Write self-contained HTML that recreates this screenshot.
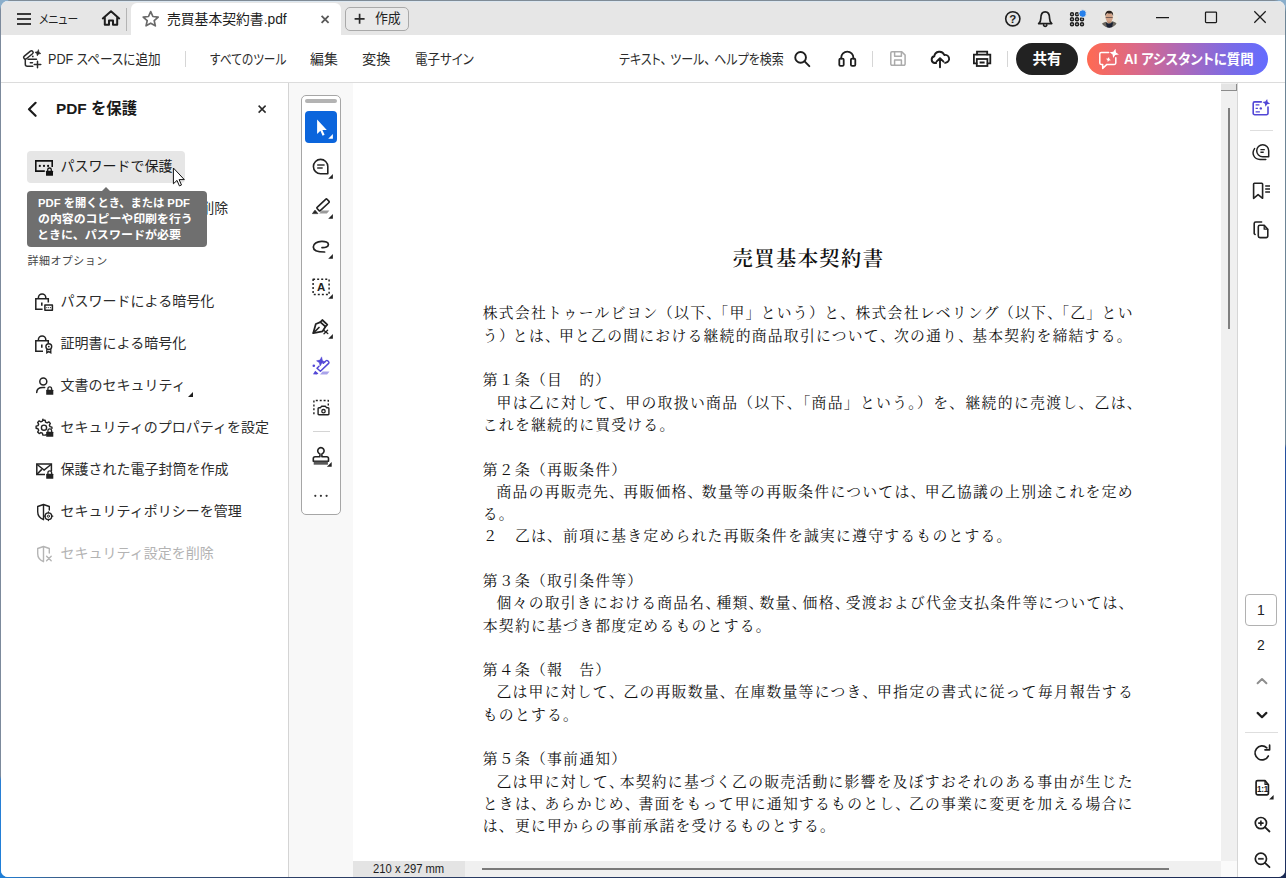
<!DOCTYPE html>
<html lang="ja">
<head>
<meta charset="utf-8">
<title>売買基本契約書.pdf</title>
<style>
*{box-sizing:border-box;margin:0;padding:0}
html,body{width:1286px;height:878px;overflow:hidden}
body{position:relative;background:#8aaecb;font-family:"Liberation Sans","Noto Sans CJK JP",sans-serif;color:#2c2c2c;-webkit-font-smoothing:antialiased}
.abs{position:absolute}
#deskL{left:0;top:0;width:8px;height:878px;background:linear-gradient(#8aaecb 0,#8aaecb 6px,#7c8a9c 10px,#7c8a9c 776px,#2a7fd4 780px,#1e7fd9 100%)}
#deskT{left:0;top:0;width:1286px;height:8px;background:linear-gradient(90deg,#8aaecb 0,#8aaecb 6px,#7f8b96 10px,#7f8b96 1274px,#8aaecb 1280px)}
#deskR{left:1278px;top:0;width:8px;height:878px;background:linear-gradient(#8aaecb 0,#8aaecb 6px,#6d8596 12px,#6d8596 444px,#2450a0 448px,#2450a0 700px,#1d2c58 100%)}
#deskB{left:0;top:870px;width:1286px;height:8px;background:linear-gradient(90deg,#1e7fd9 0,#3a5f8a 60px,#2c3f66 300px,#1b2b55 100%)}
#win{left:1px;top:1px;width:1284px;height:876px;background:#fff;border-radius:7px;overflow:hidden}
/* title bar */
#tb{left:0;top:0;width:1284px;height:34px;background:#e6e6e6;border-top:1px solid #dbe7f1}
.ui{font-family:"Liberation Sans","Noto Sans CJK JP",sans-serif;font-feature-settings:"palt" 1;white-space:nowrap}
#tab{left:130px;top:2px;width:210px;height:33px;background:#fff;border-radius:6px 6px 0 0}
#newbtn{left:344px;top:6px;width:64px;height:24px;border:1px solid #a9a9a9;border-radius:5px;background:#e9e9e9}
/* toolbar */
#bar{left:0;top:34px;width:1284px;height:48px;background:#fff;border-bottom:1px solid #dcdcdc}
.vsep{width:1px;background:#d6d6d6}
.t{transform-origin:0 50%}
.cm{margin-right:.32em}
#share{left:1015px;top:8px;width:62px;height:32px;border-radius:16px;background:#222;color:#fff;font-weight:bold;font-size:14.6px;line-height:32px;text-align:center}
#ai{left:1086px;top:8px;width:181px;height:32px;border-radius:16px;background:linear-gradient(90deg,#ff6a52 0,#d9698a 28%,#a869bd 55%,#7a6be6 80%,#646cff 100%);color:#fff;font-weight:bold;font-size:14px;line-height:32px}
/* left panel */
#lp{left:0;top:82px;width:287px;height:794px;background:#fff}
#lpb{left:287px;top:82px;width:1px;height:794px;background:#d4d4d4}
.item{left:60px;font-size:14px;line-height:20px;white-space:nowrap;font-family:"Liberation Sans","Noto Sans CJK JP",sans-serif;color:#2c2c2c}
/* doc area */
#da{left:288px;top:82px;width:932px;height:794px;background:#f8f8f8}
#page{left:352px;top:82px;width:868px;height:778px;background:#fff}
.doc{font-family:"Liberation Serif","Noto Serif CJK JP","Noto Serif CJK SC",serif;color:#111;white-space:nowrap}
.ln{left:481.8px;width:650.9px;height:22px;font-size:14.8px;letter-spacing:1.26px;line-height:22px;text-align:justify;text-align-last:justify}
.ln.s{text-align-last:left;text-align:left}
.tl{font-size:11.8px;font-weight:bold;color:#fff;line-height:16px;white-space:nowrap;font-family:"Liberation Sans","Noto Sans CJK JP",sans-serif}
/* floating tools */
#ft{left:300px;top:94px;width:40px;height:420px;background:#fff;border:1px solid #a6a6a6;border-radius:5px}
/* scrollbars */
#vs{left:1220px;top:82px;width:17px;height:778px;background:#f0f0f0;border-right:1px solid #d6d6d6}
#hs{left:464px;top:860px;width:756px;height:16px;background:#f0f0f0}
#sz{left:352px;top:860px;width:112px;height:16px;background:#e4e4e4;font-size:12px;line-height:16px;color:#222}
#corner{left:1220px;top:860px;width:16px;height:16px;background:#fafafa}
/* right rail */
#rr{left:1237px;top:82px;width:47px;height:794px;background:#fff}
svg{position:absolute;overflow:visible}
</style>
</head>
<body>
<div id="deskT" class="abs"></div><div id="deskL" class="abs"></div><div id="deskR" class="abs"></div><div id="deskB" class="abs"></div>
<div id="win" class="abs">

<!-- TITLE BAR -->
<div id="tb" class="abs"></div>
<div id="tab" class="abs"></div>
<div id="newbtn" class="abs"></div>

<div class="abs ui t" id="t-menu" style="left:37.66px;top:8.55px;font-size:12.5px;line-height:20px;color:#222;transform:scaleX(0.8615)">メニュー</div>
<div class="abs" style="left:125px;top:7px;width:1px;height:23px;background:#b4b4b4"></div>
<div class="abs ui t" id="t-tab" style="left:166.20px;top:7px;font-size:14px;line-height:22px;color:#1c1c1c;transform:scaleX(0.9860)">売買基本契約書.pdf</div>
<div class="abs ui t" id="t-new" style="left:374.39px;top:8px;font-size:13.6px;line-height:20px;color:#222;transform:scaleX(0.9468)">作成</div>

<!--TB-CONTENT-->

<!-- TOOLBAR -->
<div id="bar" class="abs">

<div class="abs ui t" id="t-add" style="left:47.03px;top:13px;font-size:14px;line-height:22px;color:#2a2a2a;transform:scaleX(0.9017)">PDF スペースに追加</div>
<div class="abs vsep" style="left:184px;top:16px;height:16px"></div>
<div class="abs ui t" id="t-all" style="left:208.98px;top:13px;font-size:14px;line-height:22px;transform:scaleX(0.8342)">すべてのツール</div>
<div class="abs ui t" id="t-edit" style="left:309.30px;top:13px;font-size:14px;line-height:22px;transform:scaleX(0.9932)">編集</div>
<div class="abs ui t" id="t-conv" style="left:361.31px;top:13px;font-size:14px;line-height:22px;transform:scaleX(1.0150)">変換</div>
<div class="abs ui t" id="t-sign" style="left:413.76px;top:13px;font-size:14px;line-height:22px;transform:scaleX(0.8910)">電子サイン</div>
<div class="abs ui t" id="t-search" style="left:618.35px;top:13px;font-size:14px;line-height:22px;transform:scaleX(0.8563)">テキスト<span class="cm">、</span>ツール<span class="cm">、</span>ヘルプを検索</div>
<div class="abs vsep" style="left:871px;top:16px;height:16px"></div>
<div class="abs vsep" style="left:1006px;top:16px;height:16px"></div>
<div id="share" class="abs ui">共有</div>
<div id="ai" class="abs ui"><span class="abs t" id="t-ai" style="left:37.1px;top:0;transform:scaleX(0.957)">AI アシスタントに質問</span></div>
<!--BAR-CONTENT-->
</div>


<svg class="abs" style="left:0;top:0" width="1284" height="82" viewBox="1 1 1284 82" fill="none" stroke-linecap="round" stroke-linejoin="round">
<g stroke="#fff" stroke-width="1.500">
<path d="M1108.600 52.600 h-7.400 a1.400 1.400 0 0 0 -1.400 1.400 v9 a1.400 1.400 0 0 0 1.400 1.400 h1.500 v4 l4.200 -4 h7.500 a1.400 1.400 0 0 0 1.400 -1.400 v-5.200"/>
</g>
<path d="M1114.300 48.600 l1.400 3.400 3.400 1.400 -3.400 1.400 -1.400 3.400 -1.400 -3.400 -3.400 -1.400 3.400 -1.400z" fill="#fff" transform="rotate(14 1114.300 53.400)"/>
<path d="M1108.400 56.900 l.8 1.800 1.800 .8 -1.800 .8 -.8 1.800 -.8 -1.800 -1.800 -.8 1.800 -.8z" fill="#fff" transform="rotate(14 1108.400 59.500)"/>
</svg>

<svg class="abs" id="ic1" style="left:0;top:0" width="1284" height="82" viewBox="1 1 1284 82" fill="none" stroke-linecap="round" stroke-linejoin="round">
<!-- hamburger -->
<g stroke="#3a3a3a" stroke-width="2" stroke-linecap="butt"><path d="M17 14h14M17 19h14M17 24h14"/></g>
<!-- home -->
<path d="M102.8 18.4 L111 11.3 L119.2 18.4 M104.8 17.2 V24.8 H109 V20.6 H113 V24.8 H117.2 V17.2" stroke="#1e1e1e" stroke-width="2"/>
<!-- star -->
<path d="M150.7 11.6 l2.2 4.9 5.3 .55 -4 3.6 1.15 5.2 -4.65 -2.7 -4.65 2.7 1.15 -5.2 -4 -3.6 5.3 -.55z" stroke="#6a6a6a" stroke-width="1.7"/>
<!-- tab close -->
<path d="M321.6 15.8 l7 7 M328.6 15.8 l-7 7" stroke="#5a5a5a" stroke-width="1.8" stroke-linecap="butt"/>
<!-- plus -->
<path d="M354.6 18.8 h10 M359.6 13.8 v10" stroke="#2a2a2a" stroke-width="1.7" stroke-linecap="butt"/>
<!-- help -->
<circle cx="1012.8" cy="18.8" r="7.1" stroke="#1e1e1e" stroke-width="1.6"/>
<text x="1012.8" y="23" text-anchor="middle" font-family="Liberation Sans, sans-serif" font-weight="bold" font-size="11.5" fill="#1e1e1e" stroke="none">?</text>
<!-- bell -->
<path d="M1038.6 23.6 c1.6 -1.2 2.2 -2.6 2.2 -5.2 c0 -4 1.6 -6.6 4.4 -6.6 s4.4 2.6 4.4 6.6 c0 2.6 .6 4 2.2 5.2 z M1043.6 25.2 a1.7 1.7 0 0 0 3.2 0" stroke="#1e1e1e" stroke-width="1.7"/>
<!-- app grid -->
<g stroke="#1e1e1e" stroke-width="1.5">
<circle cx="1072" cy="14.2" r="1.45"/><circle cx="1077" cy="14.2" r="1.45"/>
<circle cx="1072" cy="19.2" r="1.5"/><circle cx="1077" cy="19.2" r="1.5"/><circle cx="1082" cy="19.2" r="1.5"/>
<circle cx="1072" cy="24.2" r="1.5"/><circle cx="1077" cy="24.2" r="1.5"/><circle cx="1082" cy="24.2" r="1.5"/>
</g>
<circle cx="1082.6" cy="13.6" r="3.75" fill="#2680eb" stroke="#e6e6e6" stroke-width="1"/>
<!-- avatar -->
<defs><clipPath id="avc"><circle cx="1109.200" cy="18.900" r="8.800"/></clipPath></defs>
<g clip-path="url(#avc)" stroke="none">
<rect x="1100" y="9.500" width="18.500" height="19" fill="#ebe8e1"/>
<path d="M1100 28.500 v-3 c1.800 -2.300 4 -3.300 6 -3.700 l3 1.700 3.200 -2.200 c2.600 .6 4.600 1.800 6.300 4 v3.200z" fill="#6a665e"/>
<path d="M1105.800 22.600 l1.400 6 h4.600 l1.400 -6.600 -2.600 1.600 -2.400 .2z" fill="#1c2233"/>
<ellipse cx="1109.200" cy="17.300" rx="3.700" ry="4.700" fill="#d3a488"/>
<path d="M1105.200 16.400 c-.5 -3.900 1.400 -5.700 4 -5.700 s4.300 1.700 3.900 5.400 c-.5 -1.700 -1.200 -2.500 -1.900 -2.900 c-1.400 .5 -2.800 .2 -3.800 -.3 c-1.100 .8 -1.800 1.800 -2.200 3.500z" fill="#2b211c"/>
<path d="M1105.800 16.900 h6.800 v1.100 h-6.800z" fill="#5b4a45" opacity=".8"/>
<path d="M1106.600 20.200 c1 1.700 4.200 1.700 5.200 0 c-.2 2.100 -1.400 2.900 -2.600 2.900 s-2.400 -.8 -2.600 -2.900z" fill="#b98468"/>
</g>
<!-- window controls -->
<g stroke="#1a1a1a" stroke-width="1.25" stroke-linecap="butt">
<path d="M1156 17.500 h13"/>
<rect x="1205.500" y="12" width="11" height="10.500" rx=".8"/>
<path d="M1254.300 11.300 l11.400 11.400 M1265.700 11.300 l-11.400 11.400"/>
</g>
<!-- add to pdf space icon -->
<g stroke="#2a2a2a" stroke-width="1.5">
<path d="M25.300 59.300 v5 a2 2 0 0 0 2 2 h5.500"/>
<path d="M28 59.300 h8.500"/>
<path d="M30.300 62.800 h2.200"/>
<rect x="22.800" y="53.300" width="11.200" height="3.300" rx="1.650" transform="rotate(-39 28.400 54.950)"/>
<path d="M34.200 64.500 h6.600 M37.500 61.200 v6.600"/>
</g>
<circle cx="32.800" cy="56.400" r=".9" fill="#2a2a2a"/>
<path d="M37.900 49.900 l.9 2.100 2.100 .9 -2.100 .9 -.9 2.100 -.9 -2.100 -2.100 -.9 2.100 -.9z" fill="#2a2a2a" stroke="#2a2a2a" stroke-width=".6" transform="rotate(12 37.900 52.900)"/>
<!-- search -->
<circle cx="800.600" cy="57.400" r="5.350" stroke="#1e1e1e" stroke-width="1.9"/>
<path d="M804.600 61.400 l4.700 4.700" stroke="#1e1e1e" stroke-width="2"/>
<!-- headphones -->
<g stroke="#1e1e1e" stroke-width="1.800">
<path d="M841.200 58.500 v-.7 a6.100 6.100 0 0 1 12.200 0 v.7"/>
<rect x="839.300" y="58.600" width="4.400" height="7.300" rx="1.200"/>
<rect x="850.900" y="58.600" width="4.400" height="7.300" rx="1.200"/>
</g>
<!-- save (disabled) -->
<g stroke="#ababab" stroke-width="1.500">
<path d="M892 51.800 h9.800 l3.300 3.300 v9 a1.200 1.200 0 0 1 -1.200 1.200 h-11.900 a1.200 1.200 0 0 1 -1.200 -1.200 v-11.100 a1.200 1.200 0 0 1 1.200 -1.200z"/>
<path d="M894.600 52 v4.200 h6.800 v-4.200"/>
<path d="M894.600 65 v-5 h6.800 v5"/>
</g>
<!-- cloud upload -->
<g stroke="#1e1e1e" stroke-width="1.900">
<path d="M936.200 63 h-1.400 a3.400 3.400 0 0 1 -.5 -6.700 a5.200 5.200 0 0 1 10 -1.300 a3.900 3.900 0 0 1 1.800 7.600 l-1 .3"/>
<path d="M940 67.300 v-8.800 M936.500 61.700 l3.500 -3.500 3.500 3.500"/>
</g>
<!-- print -->
<g stroke="#1e1e1e" stroke-width="1.800" stroke-linejoin="miter">
<path d="M976.600 63.300 h-2.700 v-8.700 h16.400 v8.700 h-2.700"/>
<path d="M977 54.400 v-2.700 h10.200 v2.700"/>
<rect x="976.800" y="59" width="10.600" height="7"/>
<path d="M979.600 62.500 h5" stroke-linecap="butt"/>
</g>
</svg>

<!-- LEFT PANEL -->
<div id="lp" class="abs"></div><div id="lpb" class="abs"></div>
<div class="abs" style="left:26px;top:150px;width:158px;height:32px;background:#e6e6e6;border-radius:4px"></div>
<div class="abs t" id="p-title" style="left:55.32px;top:97px;font-size:15.5px;font-weight:bold;line-height:22px;color:#1a1a1a;white-space:nowrap;transform:scaleX(0.9902)">PDF を保護</div>
<div class="abs t" id="p-adv" style="left:26.5px;top:251px;font-size:11px;letter-spacing:.45px;line-height:18px;color:#464646;white-space:nowrap">詳細オプション</div>
<div class="abs item t" id="p-1" style="left:59.6px;top:155.0px;color:#1c1c1c">パスワードで保護</div>
<div class="abs item t" id="p-2" style="left:59.6px;top:197.0px;color:#2c2c2c">非表示情報を検索して削除</div>
<div class="abs item t" id="p-3" style="left:59.6px;top:290.4px;color:#2c2c2c">パスワードによる暗号化</div>
<div class="abs item t" id="p-4" style="left:59.6px;top:332.4px;color:#2c2c2c">証明書による暗号化</div>
<div class="abs item t" id="p-5" style="left:59.6px;top:374.4px;color:#2c2c2c">文書のセキュリティ</div>
<div class="abs item t" id="p-6" style="left:59.6px;top:416.4px;color:#2c2c2c">セキュリティのプロパティを設定</div>
<div class="abs item t" id="p-7" style="left:59.6px;top:458.4px;color:#2c2c2c">保護された電子封筒を作成</div>
<div class="abs item t" id="p-8" style="left:59.6px;top:500.4px;color:#2c2c2c">セキュリティポリシーを管理</div>
<div class="abs item t" id="p-9" style="left:59.6px;top:542.4px;color:#b3b3b3">セキュリティ設定を削除</div>

<svg class="abs" id="ic2" style="left:0;top:82px" width="288" height="500" viewBox="1 83 288 500" fill="none" stroke-linecap="round" stroke-linejoin="round">
<!-- back chevron -->
<path d="M35.600 102.800 l-6.600 6.500 6.600 6.500" stroke="#1c1c1c" stroke-width="2.200"/>
<!-- close -->
<path d="M258.600 105.600 l7 7 M265.600 105.600 l-7 7" stroke="#2a2a2a" stroke-width="1.500" stroke-linecap="butt"/>
<!-- item1: password box + lock -->
<g stroke="#111" stroke-width="1.600" stroke-linejoin="miter" stroke-linecap="butt">
<path d="M44.800 171.100 h-9 v-10.200 h16.400 v6.200"/>
</g>
<g fill="#111"><circle cx="39.800" cy="165.900" r="1.100"/><circle cx="44" cy="165.900" r="1.100"/><circle cx="48.100" cy="165.900" r="1.100"/>
<rect x="46" y="170.700" width="7" height="5" rx=".5"/></g>
<path d="M47.700 170.700 v-.9 a1.800 1.800 0 0 1 3.600 0 v.9" stroke="#111" stroke-width="1.300"/>
<!-- item3: lock + password badge -->
<g id="lockbase" stroke="#222" stroke-width="1.500" stroke-linejoin="miter" stroke-linecap="butt">
<path d="M42.600 309.200 h-6.800 v-10.400 h12.500 v3.600"/>
<path d="M38.400 298.600 v-.9 a3.700 3.700 0 0 1 7.400 0 v.9"/>
<path d="M41.800 302.400 v3.400" stroke-width="1.600"/>
</g>
<rect x="44.900" y="305" width="7.500" height="5.200" stroke="#222" stroke-width="1.500" fill="#fff"/>
<g fill="#222"><circle cx="46.800" cy="307.600" r=".55"/><circle cx="48.650" cy="307.600" r=".55"/><circle cx="50.500" cy="307.600" r=".55"/></g>
<!-- item4: lock + certificate -->
<g stroke="#222" stroke-width="1.500" stroke-linejoin="miter" stroke-linecap="butt" transform="translate(0 42)">
<path d="M43 309.200 h-7.200 v-10.400 h12.500 v2.400"/>
<path d="M38.400 298.600 v-.9 a3.700 3.700 0 0 1 7.400 0 v.9"/>
<path d="M41.800 302.400 v3.400" stroke-width="1.600"/>
</g>
<circle cx="48.800" cy="346.600" r="2.900" stroke="#222" stroke-width="1.400" fill="#fff"/>
<circle cx="48.800" cy="346.600" r=".9" fill="#222"/>
<path d="M46.800 349.600 v3.300 l2 -1.300 2 1.300 v-3.300" stroke="#222" stroke-width="1.300" stroke-linejoin="miter"/>
<!-- item5: person + lock -->
<circle cx="43.300" cy="381.500" r="3.500" stroke="#222" stroke-width="1.500"/>
<path d="M36.700 392.600 c0 -3.400 2.600 -5 6.200 -5 h1.800" stroke="#222" stroke-width="1.500"/>
<rect x="46.200" y="389.700" width="7.100" height="5" rx=".5" fill="#222"/>
<path d="M47.900 389.700 v-.9 a1.850 1.850 0 0 1 3.700 0 v.9" stroke="#222" stroke-width="1.300"/>
<!-- item6: gear + lock -->
<g stroke="#222" stroke-width="1.400">
<circle cx="44" cy="427.700" r="2.600"/>
<path d="M42.900 420.300 h2.200 l.5 1.900 1.500 .65 1.700 -1 1.550 1.550 -1 1.700 .65 1.500 1.900 .5 v1.300 M46.300 434.500 l-.7 .6 h-2.700 l-.5 -1.900 -1.500 -.65 -1.700 1 -1.550 -1.550 1 -1.700 -.65 -1.500 -1.900 -.5 v-2.200 l1.900 -.5 .65 -1.500 -1 -1.700 1.550 -1.550 1.700 1 1.500 -.65 .5 -1.900"/>
</g>
<rect x="46.200" y="431.700" width="7.100" height="5" rx=".5" fill="#222"/>
<path d="M47.900 431.700 v-.9 a1.850 1.850 0 0 1 3.700 0 v.9" stroke="#222" stroke-width="1.300"/>
<!-- item7: envelope + lock -->
<g stroke="#222" stroke-width="1.500" stroke-linejoin="miter" stroke-linecap="butt">
<path d="M45 474.500 h-8.200 v-10.400 h14.600 v7"/>
<path d="M37.200 464.500 l6.900 5.600 6.900 -5.600"/>
<path d="M37.200 474 l4.600 -4.600"/>
</g>
<rect x="46.200" y="473.700" width="7.100" height="5" rx=".5" fill="#222"/>
<path d="M47.900 473.700 v-.9 a1.850 1.850 0 0 1 3.700 0 v.9" stroke="#222" stroke-width="1.300"/>
<!-- item8: shield + gear -->
<path d="M43.500 504.500 l5.800 2 v3.500 M43.500 504.500 l-5.800 2 v5.200 c0 4 2.600 6.600 5.800 8 M43.500 504.800 v14.600" stroke="#222" stroke-width="1.400"/>
<circle cx="48.400" cy="516.200" r="3.300" stroke="#222" stroke-width="1.400" fill="#fff"/>
<circle cx="48.400" cy="516.200" r="1.100" stroke="#222" stroke-width="1"/>
<g stroke="#222" stroke-width="1.200"><path d="M48.400 511.800 v1 M48.400 519.600 v1 M44 516.200 h1 M51.800 516.200 h1"/></g>
<!-- item9: shield + x (disabled) -->
<path d="M43.500 546.500 l5.800 2 v4.500 M43.500 546.500 l-5.800 2 v5.200 c0 4 2.600 6.600 5.800 8 M43.500 546.800 v14.600" stroke="#b5b5b5" stroke-width="1.400"/>
<path d="M46.600 556.200 l4.600 4.600 M51.200 556.200 l-4.600 4.600" stroke="#b5b5b5" stroke-width="1.400"/>
<!-- dropdown triangle -->
<path d="M193 391.900 v5 h-5z" fill="#1e1e1e"/>
</svg>
<!--LP-CONTENT-->

<!-- DOC AREA -->
<div id="da" class="abs"></div>
<div id="page" class="abs"></div>
<div class="abs doc" id="dtitle" style="left:632px;top:241.5px;width:351px;text-align:center;font-size:20.3px;letter-spacing:1.45px;font-weight:600;line-height:32px">売買基本契約書</div>
<!--DOC-START-->
<div class="abs doc ln" style="top:300.80px">株式会社トゥールビヨン<span style="margin-left:-0.84px">（</span>以下<span style="letter-spacing:0.42px">、</span><span style="margin-left:-0.84px">「</span>甲<span style="letter-spacing:0.42px">」</span>という<span style="letter-spacing:0.42px">）</span>と<span style="letter-spacing:0.42px">、</span>株式会社レベリング<span style="margin-left:-0.84px">（</span>以下<span style="letter-spacing:0.42px">、</span><span style="margin-left:-0.84px">「</span>乙<span style="letter-spacing:0.42px">」</span>とい</div>
<div class="abs doc ln" style="top:323.79px;width:647.9px">う<span style="letter-spacing:-0.84px">）</span>とは<span style="letter-spacing:-0.84px">、</span>甲と乙の間における継続的商品取引について<span style="letter-spacing:-0.84px">、</span>次の通り<span style="letter-spacing:-0.84px">、</span>基本契約を締結する<span style="letter-spacing:-0.84px">。</span></div>
<div class="abs doc ln s" style="top:368.37px">第１条（目　的）</div>
<div class="abs doc ln" style="top:390.66px;width:660.1px"><span style="letter-spacing:-1.1px">　</span>甲は乙に対して、甲の取扱い商品（以下、「商品」という。）を、継続的に売渡し、乙は、</div>
<div class="abs doc ln s" style="top:412.95px">これを継続的に買受ける。</div>
<div class="abs doc ln s" style="top:457.53px">第２条（再販条件）</div>
<div class="abs doc ln" style="top:479.82px"><span style="letter-spacing:-1.1px">　</span>商品の再販売先<span style="letter-spacing:-0.55px">、</span>再販価格<span style="letter-spacing:-0.55px">、</span>数量等の再販条件については<span style="letter-spacing:-0.55px">、</span>甲乙協議の上別途これを定め</div>
<div class="abs doc ln s" style="top:502.11px">る。</div>
<div class="abs doc ln s" style="top:524.40px">２　乙は、前項に基き定められた再販条件を誠実に遵守するものとする。</div>
<div class="abs doc ln s" style="top:568.98px">第３条（取引条件等）</div>
<div class="abs doc ln" style="top:591.27px;width:646.7px"><span style="letter-spacing:-1.1px">　</span>個々の取引きにおける商品名<span style="letter-spacing:-3.88px">、</span>種類<span style="letter-spacing:-3.88px">、</span>数量<span style="letter-spacing:-3.88px">、</span>価格<span style="letter-spacing:-3.88px">、</span>受渡および代金支払条件等については<span style="letter-spacing:-3.88px">、</span></div>
<div class="abs doc ln s" style="top:613.56px">本契約に基づき都度定めるものとする。</div>
<div class="abs doc ln s" style="top:658.14px">第４条（報　告）</div>
<div class="abs doc ln" style="top:680.43px"><span style="letter-spacing:-1.1px">　</span>乙は甲に対して<span style="letter-spacing:-0.26px">、</span>乙の再販数量<span style="letter-spacing:-0.26px">、</span>在庫数量等につき<span style="letter-spacing:-0.26px">、</span>甲指定の書式に従って毎月報告する</div>
<div class="abs doc ln s" style="top:702.72px">ものとする。</div>
<div class="abs doc ln s" style="top:747.30px">第５条（事前通知）</div>
<div class="abs doc ln" style="top:769.59px"><span style="letter-spacing:-1.1px">　</span>乙は甲に対して<span style="letter-spacing:-4.17px">、</span>本契約に基づく乙の販売活動に影響を及ぼすおそれのある事由が生じた</div>
<div class="abs doc ln" style="top:791.88px">ときは<span style="letter-spacing:-1.24px">、</span>あらかじめ<span style="letter-spacing:-1.24px">、</span>書面をもって甲に通知するものとし<span style="letter-spacing:-1.24px">、</span>乙の事業に変更を加える場合に</div>
<div class="abs doc ln s" style="top:814.17px">は、更に甲からの事前承諾を受けるものとする。</div>
<!--DOC-END-->
<!--DOC-CONTENT-->

<!-- FLOAT TOOLS -->
<div id="ft" class="abs"></div>

<div class="abs" style="left:304px;top:98px;width:32px;height:4px;border-radius:2px;background:#b3b3b3"></div>
<div class="abs" style="left:304px;top:110px;width:32px;height:32px;border-radius:4px;background:#0b65dc"></div>
<div class="abs" style="left:312px;top:430px;width:17px;height:1px;background:#d4d4d4"></div>
<svg class="abs" id="ic3" style="left:299px;top:94px" width="44" height="422" viewBox="300 95 44 422" fill="none" stroke-linecap="round" stroke-linejoin="round">
<!-- select arrow -->
<path d="M317.100 119.600 v14.400 l3.300 -3.200 2.200 4.900 2 -.9 -2.200 -4.800 h4.400z" fill="#fff"/>
<path d="M332.900 134 v4.700 h-4.700z" fill="#fff"/>
<!-- comment -->
<path d="M320.600 159.400 a7.200 7.200 0 0 0 0 14.400 h7.200 v-7.200 a7.200 7.200 0 0 0 -7.200 -7.200z" stroke="#222" stroke-width="1.600"/>
<path d="M317.200 164.900 h7.400 M317.200 167.900 h5.500" stroke="#333" stroke-width="1.500" stroke-linecap="butt"/>
<path d="M332.900 174 v4.700 h-4.700z" fill="#222"/>
<!-- highlighter -->
<rect x="316.300" y="202.700" width="13.600" height="4.600" rx=".8" transform="rotate(-43 323 205)" stroke="#222" stroke-width="1.600"/>
<path d="M312.700 213.300 l2.300 -3.100 2.600 3.100z" fill="#222" stroke="#222" stroke-width=".8"/>
<path d="M319.100 213.600 l2.900 -3.100 h7.400 l-2.500 3.100z" fill="#9a9a9a"/>
<path d="M332.900 214 v4.700 h-4.700z" fill="#222"/>
<!-- draw loop -->
<path d="M322 247.600 c3.400 .2 6.400 -1 6.400 -3.200 c0 -2 -3 -3.200 -6.800 -3.100 c-4.600 .1 -8.300 2.400 -8.300 5.600 c0 3 3.800 5.100 11.300 5.100" stroke="#222" stroke-width="1.700"/>
<path d="M332.900 254 v4.700 h-4.700z" fill="#222"/>
<!-- text box -->
<rect x="313.100" y="279.300" width="16" height="15.200" stroke="#222" stroke-width="1.500" stroke-dasharray="2 2.050" stroke-linecap="butt"/>
<text x="321.200" y="291" text-anchor="middle" font-family="Liberation Sans, sans-serif" font-weight="bold" font-size="11.500" fill="#222">A</text>
<path d="M332.900 294 v4.700 h-4.700z" fill="#222"/>
<!-- fountain pen -->
<g stroke="#222" stroke-width="1.750">
<path d="M322.300 320 l5 4.600 -1.900 2.100 -5 -4.600z"/>
<path d="M320.400 322.100 l-4.600 1.900 -2.600 9.200 9.400 -1.900 2.800 -4.600"/>
<path d="M313.400 333 l5.600 -5.500"/>
<path d="M324 330.400 l3.800 3.200 M327.600 330.200 l-3.600 3.600" stroke-width="1.300"/>
</g>
<path d="M332.900 334 v4.700 h-4.700z" fill="#222"/>
<!-- ai edit (purple) -->
<g stroke="#5247d6" stroke-width="1.500">
<path d="M323.400 363.200 l2.600 -2.400 a1.200 1.200 0 0 1 1.700 0 l.9 .9 a1.200 1.200 0 0 1 0 1.700 l-8.200 7.800 -3.400 -3 2 -1.900"/>
</g>
<path d="M313 374.300 l2.200 -3.600 3.200 2.900 -1.600 .9z" fill="#5247d6"/>
<path d="M320.900 357.200 l1.300 3.100 3.100 1.300 -3.100 1.300 -1.300 3.100 -1.300 -3.100 -3.100 -1.300 3.100 -1.300z" fill="#5247d6" stroke="#5247d6" stroke-width=".5" transform="rotate(10 320.900 361.600)"/>
<circle cx="313.800" cy="365.800" r="1.300" fill="#5247d6"/>
<path d="M320 374.400 l2.600 -2.900 h6.900 l-2.400 2.900z" fill="#a9a3ea"/>
<!-- snapshot -->
<path d="M313.900 414.200 v-13.700 h14.400 v5" stroke="#222" stroke-width="1.400" stroke-dasharray="2 1.900" stroke-linecap="butt"/>
<path d="M318.900 407.700 h1.600 l1 -1.400 h4 l1 1.400 h1.600 a.8 .8 0 0 1 .8 .8 v5.400 a.8 .8 0 0 1 -.8 .8 h-9.200 a.8 .8 0 0 1 -.8 -.8 v-5.400 a.8 .8 0 0 1 .8 -.8z" stroke="#222" stroke-width="1.400" fill="#fff"/>
<circle cx="323.500" cy="411.200" r="1.700" stroke="#222" stroke-width="1.300"/>
<!-- stamp -->
<g stroke="#222" stroke-width="1.600">
<path d="M319.900 453.900 a3.200 3.200 0 1 1 2 0 v2.800 h4.800 a1.800 1.800 0 0 1 1.800 1.800 v2.700 h-15.200 v-2.700 a1.800 1.800 0 0 1 1.800 -1.800 h4.800z"/>
</g>
<rect x="313.700" y="461.600" width="14.200" height="3.100" fill="#585858"/>
<path d="M331.700 461.900 v4.800 h-4.800z" fill="#222"/>
<!-- more -->
<g fill="#333"><circle cx="315.300" cy="495.800" r="1.100"/><circle cx="320.900" cy="495.800" r="1.100"/><circle cx="326.600" cy="495.800" r="1.100"/></g>
</svg>
<!--FT-CONTENT-->

<!-- SCROLLBARS -->
<div id="vs" class="abs"></div><div id="hs" class="abs"></div><div id="sz" class="abs"></div><div id="corner" class="abs"></div>

<div class="abs" style="left:1220px;top:83px;width:16px;height:7px;background:#e4e4e4;border-right:1px solid #8c8c8c;border-bottom:1px solid #8c8c8c;box-sizing:content-box;width:15px;height:6px"></div>
<div class="abs" style="left:1227px;top:107px;width:2px;height:221px;background:#808080"></div>
<div class="abs" style="left:481px;top:867px;width:687px;height:2px;background:#7a7a7a"></div>
<div class="abs" id="t-size" style="left:372.30px;top:860px;font-size:12px;line-height:16px;color:#1e1e1e;white-space:nowrap;font-family:'Liberation Sans',sans-serif;transform-origin:0 50%;transform:scaleX(0.9369)">210 x 297 mm</div>
<div class="abs" style="left:1236px;top:860px;width:1px;height:16px;background:#d6d6d6"></div>
<!--SB-CONTENT-->

<!-- RIGHT RAIL -->
<div id="rr" class="abs"></div>

<div class="abs" style="left:1249px;top:129px;width:23px;height:1px;background:#dedede"></div>
<div class="abs" style="left:1244px;top:731px;width:33px;height:1px;background:#dedede"></div>
<div class="abs" style="left:1244px;top:593px;width:32px;height:32px;border:1px solid #b1b1b1;border-radius:4px;background:#fff"></div>
<div class="abs" id="t-p1" style="left:1244px;top:598.6px;width:32px;text-align:center;font-size:14px;line-height:20px;color:#222;font-family:'Liberation Sans',sans-serif">1</div>
<div class="abs" id="t-p2" style="left:1244px;top:633.7px;width:32px;text-align:center;font-size:14px;line-height:20px;color:#222;font-family:'Liberation Sans',sans-serif">2</div>
<svg class="abs" id="ic4" style="left:1237px;top:82px" width="47" height="794" viewBox="1238 83 47 794" fill="none" stroke-linecap="round" stroke-linejoin="round">
<!-- AI panel -->
<g stroke="#5247d6" stroke-width="1.600">
<path d="M1261.300 101.900 h-6.600 a1.500 1.500 0 0 0 -1.500 1.500 v9.800 a1.500 1.500 0 0 0 1.500 1.500 h11.800 a1.500 1.500 0 0 0 1.500 -1.500 v-6.200"/>
<path d="M1255.600 104.900 h3.800 M1255.600 108.400 h2.300 M1255.600 111.900 h4.300" stroke-width="1.400" stroke-linecap="butt"/>
</g>
<circle cx="1260.800" cy="108.400" r="1.200" fill="#5247d6"/>
<path d="M1266.300 98.800 l1.200 2.800 2.800 1.200 -2.800 1.200 -1.200 2.800 -1.200 -2.800 -2.800 -1.200 2.800 -1.200z" fill="#5247d6" transform="rotate(12 1266.300 102.800)"/>
<!-- comments -->
<g stroke="#222" stroke-width="1.500">
<path d="M1262.700 144.800 a6 6 0 0 0 0 12 h6 v-6 a6 6 0 0 0 -6 -6z"/>
<path d="M1260.400 149.600 h4.400 M1260.400 152.300 h3.300" stroke-width="1.400" stroke-linecap="butt"/>
<path d="M1254.600 148.600 c-3.400 4.600 -.6 10.800 5.400 10.800 h5.800"/>
</g>
<!-- bookmark -->
<g stroke="#222" stroke-width="1.600">
<path d="M1253.600 198.300 v-14.200 a.8 .8 0 0 1 .8 -.8 h7.400 a.8 .8 0 0 1 .8 .8 v14.200 l-4.500 -3.700z"/>
<path d="M1265.200 185.900 h4.800 M1265.200 188.900 h4.800 M1265.200 191.900 h4.800" stroke-width="1.500" stroke-linecap="butt"/>
</g>
<!-- pages -->
<g stroke="#222" stroke-width="1.600">
<path d="M1261.600 222 h-5.800 a1.600 1.600 0 0 0 -1.600 1.600 v10 l.9 .9"/>
<path d="M1264.200 225.200 h-4.300 a1.600 1.600 0 0 0 -1.600 1.600 v9.200 a1.600 1.600 0 0 0 1.600 1.600 h6.300 a1.600 1.600 0 0 0 1.600 -1.600 v-6.800z"/>
<path d="M1264.200 225.600 v3.600 h3.400" stroke-width="1.300"/>
</g>
<!-- chevrons -->
<path d="M1257.600 683.300 l4.400 -4.300 4.400 4.300" stroke="#8e8e8e" stroke-width="2"/>
<path d="M1257.600 712.900 l4.400 4.300 4.400 -4.300" stroke="#1e1e1e" stroke-width="2.200"/>
<!-- rotate -->
<path d="M1268.300 756 a7 7 0 1 1 -1.500 -8.200" stroke="#1e1e1e" stroke-width="1.700"/>
<path d="M1269.600 745.200 v4.600 h-4.600" stroke="#1e1e1e" stroke-width="1.700"/>
<!-- 1:1 -->
<path d="M1265 780.600 h-7.400 a1.500 1.500 0 0 0 -1.500 1.500 v11.200 a1.500 1.500 0 0 0 1.500 1.500 h9.300 a1.500 1.500 0 0 0 1.500 -1.500 v-8.600z" stroke="#1e1e1e" stroke-width="1.700"/>
<path d="M1265 781 v3.400 h3.200" stroke="#1e1e1e" stroke-width="1.200"/>
<text x="1262.500" y="792.200" text-anchor="middle" font-family="Liberation Sans, sans-serif" font-weight="bold" font-size="8.200" fill="#1e1e1e" letter-spacing="-.3">1:1</text>
<path d="M1273.600 795 v4.500 h-4.500z" fill="#1e1e1e"/>
<!-- zoom in -->
<circle cx="1260.900" cy="823.100" r="5.600" stroke="#1e1e1e" stroke-width="1.700"/>
<path d="M1265 827.200 l4.500 4.300" stroke="#1e1e1e" stroke-width="1.800"/>
<path d="M1258.200 823.100 h5.400 M1260.900 820.400 v5.400" stroke="#1e1e1e" stroke-width="1.600" stroke-linecap="butt"/>
<!-- zoom out -->
<circle cx="1260.900" cy="858.800" r="5.600" stroke="#1e1e1e" stroke-width="1.700"/>
<path d="M1265 862.900 l4.500 4.300" stroke="#1e1e1e" stroke-width="1.800"/>
<path d="M1258.100 858.800 h5.600" stroke="#333" stroke-width="1.800" stroke-linecap="butt"/>
</svg>
<!--RR-CONTENT-->

<!-- TOOLTIP + CURSOR -->

<div class="abs" id="tip" style="left:26px;top:190px;width:180px;height:56px;background:#6f6f6f;border-radius:4px"></div>
<div class="abs" style="left:100.3px;top:186px;width:0;height:0;border-left:5px solid transparent;border-right:5px solid transparent;border-bottom:5px solid #6f6f6f"></div>
<div class="abs t tl" id="tt-1" style="left:37.22px;top:194.3px;transform:scaleX(0.9548)">PDF を開くとき、または PDF</div>
<div class="abs t tl" id="tt-2" style="left:37.19px;top:209.9px;transform:scaleX(1.0087)">の内容のコピーや印刷を行う</div>
<div class="abs t tl" id="tt-3" style="left:36.2px;top:225.5px;transform:scaleX(1.0208)">ときに、パスワードが必要</div>
<svg class="abs" style="left:0;top:0" width="300" height="300" viewBox="1 1 300 300"><path d="M173.400 168 v15.800 l3.600 -3.400 2.400 5.500 2.100 -.9 -2.400 -5.400 h5.200z" fill="#fff" stroke="#111" stroke-width="1" stroke-linejoin="miter"/></svg>
<!--TT-CONTENT-->

</div>
</body>
</html>
